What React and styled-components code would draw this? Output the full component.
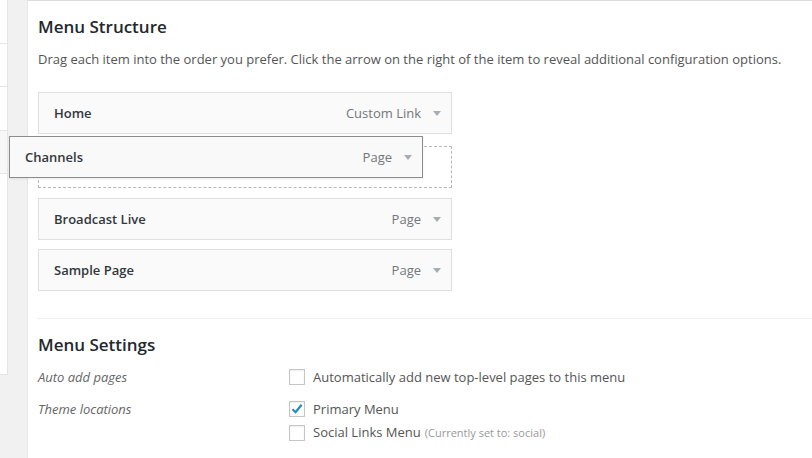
import React from "react";
import styled, { createGlobalStyle } from "styled-components";

const GlobalStyle = createGlobalStyle`
  html, body {
    margin: 0;
    padding: 0;
    background: #f1f1f1;
    font-family: "Open Sans", "Liberation Sans", sans-serif;
    color: #444;
    overflow: hidden;
  }
`;

const Page = styled.div`
  position: relative;
  display: flex;
  height: 458px;
  gap: 19px;
`;

const SideColumn = styled.div`
  width: 7px;
  align-self: flex-start;
  background: #fff;
  border-right: 1px solid #e5e5e5;
  border-bottom: 1px solid #e5e5e5;
  display: flex;
  flex-direction: column;
`;

const SideSection = styled.div`
  height: ${(p) => p.h}px;
  border-bottom: ${(p) => (p.last ? "none" : "1px solid #e5e5e5")};
  background: ${(p) => (p.shade ? "#f7f7f7" : "#fff")};
`;

const Panel = styled.div`
  flex: 1;
  background: #fff;
  border-left: 1px solid #e5e5e5;
  border-top: 1px solid #dcdcdc;
  padding-left: 10px;
`;

const Heading = styled.h3`
  margin: ${(p) => p.top}px 0 0;
  font-size: 17px;
  line-height: 24px;
  font-weight: 600;
  color: #23282d;
`;

const Description = styled.p`
  margin: 10px 0 0;
  font-size: 13px;
  line-height: 20px;
  color: #555;
`;

const ItemList = styled.div`
  margin-top: 23px;
  width: 414px;
  display: flex;
  flex-direction: column;
  gap: 9px;
`;

const Item = styled.div`
  box-sizing: border-box;
  height: 42px;
  display: flex;
  align-items: center;
  padding: 0 10px 0 15px;
  background: #fafafa;
  border: 1px solid #dfdfdf;
  font-size: 13px;
`;

const Placeholder = styled.div`
  box-sizing: border-box;
  height: 42px;
  margin: 3px 0 1px;
  border: 1px dashed #b4b9be;
`;

const DraggedItem = styled(Item)`
  position: absolute;
  left: 9px;
  top: 136px;
  width: 414px;
  background: #f9f9f9;
  border-color: #8c8c8c;
  box-shadow: 0 1px 2px rgba(0, 0, 0, 0.08);
`;

const ItemTitle = styled.span`
  flex: 1;
  font-weight: 600;
  color: #32373c;
`;

const ItemType = styled.span`
  color: #72777c;
`;

const Arrow = styled.span`
  margin-left: 12px;
  width: 0;
  height: 0;
  border-left: 4px solid transparent;
  border-right: 4px solid transparent;
  border-top: 5px solid #a8adb2;
`;

const Separator = styled.div`
  margin-top: 27px;
  height: 1px;
  background: #eee;
`;

const SettingRow = styled.div`
  display: flex;
  margin-top: ${(p) => p.top}px;
`;

const SettingLabel = styled.div`
  width: 251px;
  font-size: 13px;
  line-height: 20px;
  font-style: italic;
  color: #666;
`;

const Options = styled.div`
  display: flex;
  flex-direction: column;
  gap: 3px;
`;

const Option = styled.label`
  display: flex;
  align-items: center;
  gap: 8px;
  font-size: 13px;
  line-height: 20px;
  color: #555;
`;

const Box = styled.span`
  box-sizing: border-box;
  width: 16px;
  height: 16px;
  border: 1px solid #c4c4c4;
  background: #fff;
  box-shadow: inset 0 1px 2px rgba(0, 0, 0, 0.07);
  display: flex;
  align-items: center;
  justify-content: center;
`;

const Note = styled.span`
  font-size: 11px;
  color: #999;
  margin-left: 4px;
`;

const Checkbox = ({ checked }) => (
  <Box>
    {checked && (
      <svg width="14" height="14" viewBox="0 0 14 14">
        <path d="M2.5 7.2 L5.6 10.2 L11.6 2.8" fill="none" stroke="#1e8cbe" strokeWidth="2.2" />
      </svg>
    )}
  </Box>
);

const MenuItem = ({ title, type }) => (
  <Item>
    <ItemTitle>{title}</ItemTitle>
    <ItemType>{type}</ItemType>
    <Arrow />
  </Item>
);

export default function App() {
  return (
    <>
      <GlobalStyle />
      <Page>
        <SideColumn>
          <SideSection h={43} />
          <SideSection h={42} />
          <SideSection h={43} />
          <SideSection h={42} shade />
          <SideSection h={200} last />
        </SideColumn>
        <Panel>
          <Heading top={14}>Menu Structure</Heading>
          <Description>
            Drag each item into the order you prefer. Click the arrow on the right of the item to reveal additional configuration options.
          </Description>
          <ItemList>
            <MenuItem title="Home" type="Custom Link" />
            <Placeholder />
            <MenuItem title="Broadcast Live" type="Page" />
            <MenuItem title="Sample Page" type="Page" />
          </ItemList>
          <Separator />
          <Heading top={14}>Menu Settings</Heading>
          <SettingRow top={10}>
            <SettingLabel>Auto add pages</SettingLabel>
            <Options>
              <Option>
                <Checkbox />
                Automatically add new top-level pages to this menu
              </Option>
            </Options>
          </SettingRow>
          <SettingRow top={12}>
            <SettingLabel>Theme locations</SettingLabel>
            <Options>
              <Option>
                <Checkbox checked />
                Primary Menu
              </Option>
              <Option>
                <Checkbox />
                <span>
                  Social Links Menu<Note>(Currently set to: social)</Note>
                </span>
              </Option>
            </Options>
          </SettingRow>
        </Panel>
        <DraggedItem>
          <ItemTitle>Channels</ItemTitle>
          <ItemType>Page</ItemType>
          <Arrow />
        </DraggedItem>
      </Page>
    </>
  );
}
